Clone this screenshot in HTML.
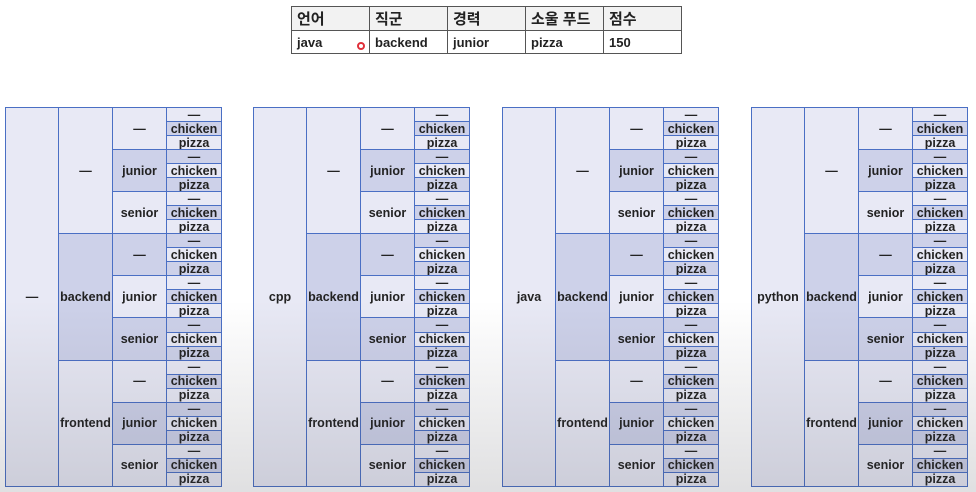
<!DOCTYPE html>
<html><head><meta charset="utf-8"><style>
body{margin:0;width:976px;height:492px;background:#fff;position:relative;overflow:hidden;font-family:"Liberation Sans","Noto Sans CJK KR",sans-serif;}
.top{position:absolute;left:291px;top:6px;border-collapse:collapse;font-size:13px;font-weight:bold;color:#222;table-layout:fixed;width:391px}
.top td{border:1px solid #555;padding:0 5px;height:23px;box-sizing:border-box}
.top tr:first-child td{background:#f2f2f2;font-size:15px;height:24px;font-weight:bold}
.t{position:absolute;top:107px;width:216px;height:380px;border-collapse:collapse;font-size:12.5px;font-weight:bold;color:#222;table-layout:fixed}
.t td{border:1px solid #4a6fc4;text-align:center;padding:0;height:13px;line-height:12px;overflow:hidden;white-space:nowrap}
.L{background:#e8e9f5}.D{background:#cdd1e9}
.c1{width:53px}.c2{width:54px}.c3{width:54px}.c4{width:55px}
.ov{position:absolute;left:0;top:300px;width:976px;height:192px;background:linear-gradient(rgba(0,0,0,0),rgba(60,60,70,0.16));pointer-events:none}
</style></head><body>
<table class="top"><tr><td>언어</td><td>직군</td><td>경력</td><td>소울 푸드</td><td>점수</td></tr>
<tr><td>java</td><td>backend</td><td>junior</td><td>pizza</td><td>150</td></tr></table>

<table class="t" style="left:5px"><colgroup><col class="c1"><col class="c2"><col class="c3"><col class="c4"></colgroup>
<tr><td rowspan="27" class="L">—</td><td rowspan="9" class="L">—</td><td rowspan="3" class="L">—</td><td class="L">—</td></tr><tr><td class="D">chicken</td></tr><tr><td class="L">pizza</td></tr>
<tr><td rowspan="3" class="D">junior</td><td class="D">—</td></tr><tr><td class="L">chicken</td></tr><tr><td class="D">pizza</td></tr>
<tr><td rowspan="3" class="L">senior</td><td class="L">—</td></tr><tr><td class="D">chicken</td></tr><tr><td class="L">pizza</td></tr>
<tr><td rowspan="9" class="D">backend</td><td rowspan="3" class="D">—</td><td class="D">—</td></tr><tr><td class="L">chicken</td></tr><tr><td class="D">pizza</td></tr>
<tr><td rowspan="3" class="L">junior</td><td class="L">—</td></tr><tr><td class="D">chicken</td></tr><tr><td class="L">pizza</td></tr>
<tr><td rowspan="3" class="D">senior</td><td class="D">—</td></tr><tr><td class="L">chicken</td></tr><tr><td class="D">pizza</td></tr>
<tr><td rowspan="9" class="L">frontend</td><td rowspan="3" class="L">—</td><td class="L">—</td></tr><tr><td class="D">chicken</td></tr><tr><td class="L">pizza</td></tr>
<tr><td rowspan="3" class="D">junior</td><td class="D">—</td></tr><tr><td class="L">chicken</td></tr><tr><td class="D">pizza</td></tr>
<tr><td rowspan="3" class="L">senior</td><td class="L">—</td></tr><tr><td class="D">chicken</td></tr><tr><td class="L">pizza</td></tr>
</table>

<table class="t" style="left:253px"><colgroup><col class="c1"><col class="c2"><col class="c3"><col class="c4"></colgroup>
<tr><td rowspan="27" class="L">cpp</td><td rowspan="9" class="L">—</td><td rowspan="3" class="L">—</td><td class="L">—</td></tr><tr><td class="D">chicken</td></tr><tr><td class="L">pizza</td></tr>
<tr><td rowspan="3" class="D">junior</td><td class="D">—</td></tr><tr><td class="L">chicken</td></tr><tr><td class="D">pizza</td></tr>
<tr><td rowspan="3" class="L">senior</td><td class="L">—</td></tr><tr><td class="D">chicken</td></tr><tr><td class="L">pizza</td></tr>
<tr><td rowspan="9" class="D">backend</td><td rowspan="3" class="D">—</td><td class="D">—</td></tr><tr><td class="L">chicken</td></tr><tr><td class="D">pizza</td></tr>
<tr><td rowspan="3" class="L">junior</td><td class="L">—</td></tr><tr><td class="D">chicken</td></tr><tr><td class="L">pizza</td></tr>
<tr><td rowspan="3" class="D">senior</td><td class="D">—</td></tr><tr><td class="L">chicken</td></tr><tr><td class="D">pizza</td></tr>
<tr><td rowspan="9" class="L">frontend</td><td rowspan="3" class="L">—</td><td class="L">—</td></tr><tr><td class="D">chicken</td></tr><tr><td class="L">pizza</td></tr>
<tr><td rowspan="3" class="D">junior</td><td class="D">—</td></tr><tr><td class="L">chicken</td></tr><tr><td class="D">pizza</td></tr>
<tr><td rowspan="3" class="L">senior</td><td class="L">—</td></tr><tr><td class="D">chicken</td></tr><tr><td class="L">pizza</td></tr>
</table>

<table class="t" style="left:502px"><colgroup><col class="c1"><col class="c2"><col class="c3"><col class="c4"></colgroup>
<tr><td rowspan="27" class="L">java</td><td rowspan="9" class="L">—</td><td rowspan="3" class="L">—</td><td class="L">—</td></tr><tr><td class="D">chicken</td></tr><tr><td class="L">pizza</td></tr>
<tr><td rowspan="3" class="D">junior</td><td class="D">—</td></tr><tr><td class="L">chicken</td></tr><tr><td class="D">pizza</td></tr>
<tr><td rowspan="3" class="L">senior</td><td class="L">—</td></tr><tr><td class="D">chicken</td></tr><tr><td class="L">pizza</td></tr>
<tr><td rowspan="9" class="D">backend</td><td rowspan="3" class="D">—</td><td class="D">—</td></tr><tr><td class="L">chicken</td></tr><tr><td class="D">pizza</td></tr>
<tr><td rowspan="3" class="L">junior</td><td class="L">—</td></tr><tr><td class="D">chicken</td></tr><tr><td class="L">pizza</td></tr>
<tr><td rowspan="3" class="D">senior</td><td class="D">—</td></tr><tr><td class="L">chicken</td></tr><tr><td class="D">pizza</td></tr>
<tr><td rowspan="9" class="L">frontend</td><td rowspan="3" class="L">—</td><td class="L">—</td></tr><tr><td class="D">chicken</td></tr><tr><td class="L">pizza</td></tr>
<tr><td rowspan="3" class="D">junior</td><td class="D">—</td></tr><tr><td class="L">chicken</td></tr><tr><td class="D">pizza</td></tr>
<tr><td rowspan="3" class="L">senior</td><td class="L">—</td></tr><tr><td class="D">chicken</td></tr><tr><td class="L">pizza</td></tr>
</table>

<table class="t" style="left:751px"><colgroup><col class="c1"><col class="c2"><col class="c3"><col class="c4"></colgroup>
<tr><td rowspan="27" class="L">python</td><td rowspan="9" class="L">—</td><td rowspan="3" class="L">—</td><td class="L">—</td></tr><tr><td class="D">chicken</td></tr><tr><td class="L">pizza</td></tr>
<tr><td rowspan="3" class="D">junior</td><td class="D">—</td></tr><tr><td class="L">chicken</td></tr><tr><td class="D">pizza</td></tr>
<tr><td rowspan="3" class="L">senior</td><td class="L">—</td></tr><tr><td class="D">chicken</td></tr><tr><td class="L">pizza</td></tr>
<tr><td rowspan="9" class="D">backend</td><td rowspan="3" class="D">—</td><td class="D">—</td></tr><tr><td class="L">chicken</td></tr><tr><td class="D">pizza</td></tr>
<tr><td rowspan="3" class="L">junior</td><td class="L">—</td></tr><tr><td class="D">chicken</td></tr><tr><td class="L">pizza</td></tr>
<tr><td rowspan="3" class="D">senior</td><td class="D">—</td></tr><tr><td class="L">chicken</td></tr><tr><td class="D">pizza</td></tr>
<tr><td rowspan="9" class="L">frontend</td><td rowspan="3" class="L">—</td><td class="L">—</td></tr><tr><td class="D">chicken</td></tr><tr><td class="L">pizza</td></tr>
<tr><td rowspan="3" class="D">junior</td><td class="D">—</td></tr><tr><td class="L">chicken</td></tr><tr><td class="D">pizza</td></tr>
<tr><td rowspan="3" class="L">senior</td><td class="L">—</td></tr><tr><td class="D">chicken</td></tr><tr><td class="L">pizza</td></tr>
</table>

<div style="position:absolute;left:357px;top:42px;width:8px;height:8px;border:2px solid #e0303a;border-radius:50%;box-sizing:border-box"></div>
<div class="ov"></div>
</body></html>
